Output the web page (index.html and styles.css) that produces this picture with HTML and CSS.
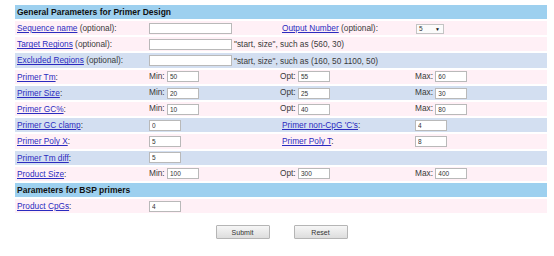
FILE: index.html
```html
<!DOCTYPE html>
<html>
<head>
<meta charset="utf-8">
<link rel="stylesheet" href="styles.css">
</head>
<body>
<form class="page">
<table class="params">
  <colgroup><col class="c1"><col class="c2"><col class="c3"><col class="c4"></colgroup>
  <tr class="head"><td colspan="4">General Parameters for Primer Design</td></tr>
  <tr class="pink">
    <td><a href="#">Sequence name</a> (optional):</td>
    <td><input class="wide" type="text"></td>
    <td class="lab3"><a href="#">Output Number</a> (optional):</td>
    <td><span class="select">5<span class="arrow">▼</span></span></td>
  </tr>
  <tr class="pink">
    <td><a href="#">Target Regions</a> (optional):</td>
    <td colspan="3"><input class="wide" type="text"><span class="hint">"start, size", such as (560, 30)</span></td>
  </tr>
  <tr class="blue">
    <td><a href="#">Excluded Regions</a> (optional):</td>
    <td colspan="3"><input class="wide" type="text"><span class="hint">"start, size", such as (160, 50 1100, 50)</span></td>
  </tr>
  <tr class="pink">
    <td><a href="#">Primer Tm</a>:</td>
    <td>Min: <input class="num" type="text" value="50"></td>
    <td>Opt: <input class="num" type="text" value="55"></td>
    <td>Max: <input class="num" type="text" value="60"></td>
  </tr>
  <tr class="blue">
    <td><a href="#">Primer Size</a>:</td>
    <td>Min: <input class="num" type="text" value="20"></td>
    <td>Opt: <input class="num" type="text" value="25"></td>
    <td>Max: <input class="num" type="text" value="30"></td>
  </tr>
  <tr class="pink">
    <td><a href="#">Primer GC%</a>:</td>
    <td>Min: <input class="num" type="text" value="10"></td>
    <td>Opt: <input class="num" type="text" value="40"></td>
    <td>Max: <input class="num" type="text" value="80"></td>
  </tr>
  <tr class="blue">
    <td><a href="#">Primer GC clamp</a>:</td>
    <td><input class="num" type="text" value="0"></td>
    <td class="lab3"><a href="#">Primer non-CpG 'C's</a>:</td>
    <td><input class="num" type="text" value="4"></td>
  </tr>
  <tr class="pink">
    <td><a href="#">Primer Poly X</a>:</td>
    <td><input class="num" type="text" value="5"></td>
    <td class="lab3"><a href="#">Primer Poly T</a>:</td>
    <td><input class="num" type="text" value="8"></td>
  </tr>
  <tr class="blue">
    <td><a href="#">Primer Tm diff</a>:</td>
    <td><input class="num" type="text" value="5"></td>
    <td colspan="2"></td>
  </tr>
  <tr class="pink">
    <td><a href="#">Product Size</a>:</td>
    <td>Min: <input class="num" type="text" value="100"></td>
    <td>Opt: <input class="num" type="text" value="300"></td>
    <td>Max: <input class="num" type="text" value="400"></td>
  </tr>
  <tr class="head"><td colspan="4">Parameters for BSP primers</td></tr>
  <tr class="pink">
    <td><a href="#">Product CpGs</a>:</td>
    <td><input class="num" type="text" value="4"></td>
    <td colspan="2"></td>
  </tr>
</table>
<div class="actions">
  <button type="button" class="btn">Submit</button>
  <button type="button" class="btn">Reset</button>
</div>
</form>
</body>
</html>
```

FILE: styles.css
```css
html, body {
  margin: 0;
  padding: 0;
  background: #ffffff;
}
body {
  font-family: "Liberation Sans", Arial, sans-serif;
  font-size: 8.3px;
  color: #3a3a3a;
}
.page {
  margin: 3px 0 0 15px;
  width: 532px;
}
.params {
  width: 532px;
  border-collapse: separate;
  border-spacing: 0 2px;
  table-layout: fixed;
}
.c1 { width: 132px; }
.c2 { width: 131px; }
.c3 { width: 135px; }
.c4 { width: 134px; }
.params td {
  height: 14.2px;
  padding: 0 0 0 2px;
  vertical-align: middle;
  white-space: nowrap;
  line-height: 10px;
  box-sizing: border-box;
}
.params tr.head td {
  height: 14px;
  background: #9dd0ef;
  font-weight: bold;
  font-size: 8.5px;
  color: #111111;
}
.pink td { background: #fff0f6; }
.blue td { background: #d3dff1; }
.params td.lab3 { padding-left: 4px; }
a {
  color: #2b2bbf;
  text-decoration: underline;
}
input {
  font-family: "Liberation Sans", Arial, sans-serif;
  font-size: 6.5px;
  color: #333333;
  border: 1px solid #b9b9b9;
  background: #ffffff;
  box-sizing: border-box;
  height: 11px;
  padding: 0 0 0 2px;
  margin: 0;
  vertical-align: middle;
}
input.wide { width: 83px; }
input.num { width: 32px; }
.hint { margin-left: 2px; vertical-align: middle; }
.select {
  display: inline-flex;
  align-items: center;
  justify-content: space-between;
  width: 28px;
  height: 10px;
  box-sizing: border-box;
  border: 1px solid #c4c4c4;
  background: #fbfbfb;
  font-size: 6.5px;
  padding: 0 3px 0 2px;
  margin-left: 1px;
  vertical-align: middle;
  color: #333333;
}
.arrow { font-size: 5px; color: #111111; }
.actions {
  display: flex;
  justify-content: center;
  gap: 24px;
  margin-top: 10px;
  padding-left: 1px;
}
.btn {
  width: 54px;
  height: 14px;
  font-family: "Liberation Sans", Arial, sans-serif;
  font-size: 7px;
  color: #333333;
  border: 1px solid #b5b5b5;
  border-radius: 1px;
  background: linear-gradient(#f6f6f6, #dddddd);
  padding: 0;
}
```
